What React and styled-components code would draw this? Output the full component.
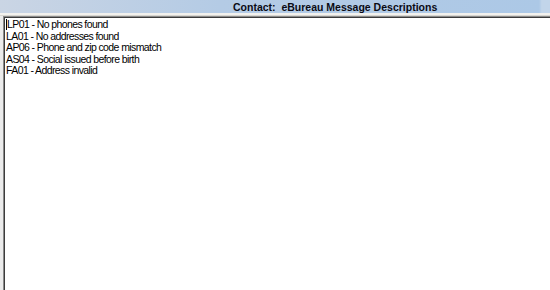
import styled, { createGlobalStyle } from 'styled-components'

const GlobalStyle = createGlobalStyle`
	html, body {
		margin: 0;
		padding: 0;
		background: #ece9e4;
	}
`

const Window = styled.div`
	width: 550px;
	height: 290px;
	display: flex;
	flex-direction: column;
	background: #ebebeb;
	font-family: 'Liberation Sans', Arial, sans-serif;
	overflow: hidden;
`
const TitleBar = styled.div`
	height: 13px;
	display: flex;
	align-items: center;
	padding-left: 233px;
	background: linear-gradient(to right, #cad5e4 0%, #b4cbe5 40%, #acc8e6 98%, #c2d5ea 98.5%);
	font-size: 10.5px;
	font-weight: 700;
	color: #0a0a14;
	white-space: pre;
`
const Strip = styled.div`
	height: 2px;
	background: #f2f1ee;
	border-bottom: 1px solid #d8d6d0;
`
const Field = styled.div`
	flex: 1;
	margin-left: 3px;
	background: #fff;
	border-top: 1px solid #8a8a8a;
	border-left: 1px solid #8a8a8a;
	box-shadow: inset 1px 1px 0 #3c3c3c;
	padding: 2px 0 0 2px;
	font-size: 10.5px;
	letter-spacing: -0.6px;
	line-height: 11.5px;
	color: #000;
`
const Line = styled.div`
	white-space: pre;
`
const Caret = styled.span`
	display: inline-block;
	width: 0;
	height: 11px;
	border-left: 1px solid #000;
	vertical-align: -2px;
`

const messages = [
	'LP01 - No phones found',
	'LA01 - No addresses found',
	'AP06 - Phone and zip code mismatch',
	'AS04 - Social issued before birth',
	'FA01 - Address invalid',
]

const App = () => {
	return (
		<Window>
			<GlobalStyle />
			<TitleBar>Contact:  eBureau Message Descriptions</TitleBar>
			<Strip />
			<Field>
				{messages.map((m, i) => (
					<Line key={m}>
						{i === 0 && <Caret />}
						{m}
					</Line>
				))}
			</Field>
		</Window>
	)
}

export default App
